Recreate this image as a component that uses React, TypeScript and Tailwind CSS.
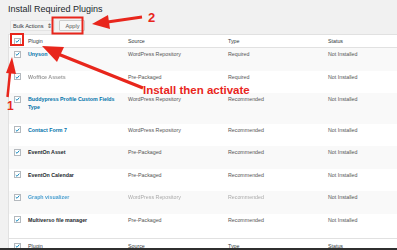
import React from "react";

type Row = {
  name: React.ReactNode;
  kind: "link" | "bold" | "blurgray" | "blurlink";
  source: string;
  type: string;
  blurMeta?: boolean;
};

const rows: Row[] = [
  { name: "Unyson", kind: "link", source: "WordPress Repository", type: "Required" },
  { name: "Woffice Assets", kind: "blurgray", source: "Pre-Packaged", type: "Required" },
  {
    name: (
      <>
        Buddypress Profile Custom Fields
        <br />
        Type
      </>
    ),
    kind: "link",
    source: "WordPress Repository",
    type: "Recommended",
  },
  { name: "Contact Form 7", kind: "link", source: "WordPress Repository", type: "Recommended" },
  { name: "EventOn Asset", kind: "bold", source: "Pre-Packaged", type: "Recommended" },
  { name: "EventOn Calendar", kind: "bold", source: "Pre-Packaged", type: "Recommended" },
  { name: "Graph visualizer", kind: "blurlink", source: "WordPress Repository", type: "Recommended", blurMeta: true },
  { name: "Multiverso file manager", kind: "bold", source: "Pre-Packaged", type: "Recommended" },
];

function Check() {
  return (
    <span className="flex h-[7px] w-[7px] items-center justify-center border border-[#b4b9be] bg-white">
      <svg width="6" height="6" viewBox="0 0 10 10">
        <path d="M1.5 5.2 L4 7.6 L8.6 2.2" fill="none" stroke="#1e8cbe" strokeWidth="2" />
      </svg>
    </span>
  );
}

function nameClass(kind: Row["kind"]) {
  switch (kind) {
    case "link":
      return "text-[#0073aa] font-bold";
    case "bold":
      return "text-[#23282d] font-bold";
    case "blurgray":
      return "text-[#9a9a9a] font-bold blur-[0.7px]";
    case "blurlink":
      return "text-[#4a9fd0] font-bold blur-[0.7px]";
  }
}

function HeadRow({ footer }: { footer?: boolean }) {
  return (
    <div
      className={`grid grid-cols-[17px_100px_100px_100px_1fr] items-center text-[#32373c] ${
        footer ? "border-t border-[#e1e1e1] mt-[2px] h-[15px]" : "border-b border-[#e1e1e1] h-[13px]"
      }`}
    >
      <div className="flex justify-center">
        <Check />
      </div>
      <div className="pl-[2px]">Plugin</div>
      <div className="pl-[2px]">Source</div>
      <div className="pl-[2px]">Type</div>
      <div className="pl-[2px]">Status</div>
    </div>
  );
}

export default function App() {
  return (
    <div className="relative h-[250px] w-[397px] overflow-hidden bg-[#f1f1f1] font-['Liberation_Sans',Arial,sans-serif] text-[5.3px] leading-[8px] text-[#555]">
      <div className="pl-[8px]">
        <h1 className="pt-[3px] text-[9px] leading-[12px] font-normal text-[#23282d]">Install Required Plugins</h1>
        <div className="mt-[4px] ml-[2px] flex h-[13px] items-center gap-[4px]">
          <div className="flex h-[11px] items-center gap-[4px] rounded-[1px] border border-[#e4e4e4] bg-[#f4f4f4] px-[2px] text-[#32373c] text-[5.6px]">
            <span>Bulk Actions</span>
            <span className="text-[6px] leading-none">⇕</span>
          </div>
          <div className="flex h-[11px] items-center rounded-[1px] border border-[#ccc] bg-[#f7f7f7] px-[5px] text-[#555] text-[5.6px]">
            Apply
          </div>
        </div>
        <div className="mt-[2px] border-l border-t border-[#e1e1e1] bg-white">
          <HeadRow />
          {rows.map((r, i) => (
            <div
              key={i}
              className={`grid grid-cols-[17px_100px_100px_100px_1fr] items-start pt-[2px] pb-[12.5px] ${
                i % 2 === 0 ? "bg-[#f9f9f9]" : "bg-white"
              }`}
            >
              <div className="flex h-[8px] items-center justify-center">
                <Check />
              </div>
              <div className={`pl-[2px] ${nameClass(r.kind)}`}>{r.name}</div>
              <div className={`pl-[2px] ${r.blurMeta ? "blur-[0.7px] text-[#aaa]" : ""}`}>{r.source}</div>
              <div className={`pl-[2px] ${r.blurMeta ? "blur-[0.7px] text-[#aaa]" : ""}`}>{r.type}</div>
              <div className="pl-[2px]">Not Installed</div>
            </div>
          ))}
          <HeadRow footer />
        </div>
      </div>
      <div className="absolute bottom-0 left-0 h-[2px] w-full bg-[#2f2f2f]" />

      {/* annotations */}
      <svg className="pointer-events-none absolute inset-0" width="397" height="250" viewBox="0 0 397 250">
        <rect x="52.5" y="17.5" width="30" height="16" fill="none" stroke="#e8261c" strokeWidth="2" />
        <rect x="11" y="34" width="12" height="11" fill="none" stroke="#e8261c" strokeWidth="2" />
        <line x1="142" y1="17" x2="104" y2="22.5" stroke="#e8261c" strokeWidth="3" />
        <polygon points="92,24 108,15 110,29" fill="#e8261c" />
        <line x1="143" y1="88" x2="58" y2="54" stroke="#e8261c" strokeWidth="3.5" />
        <polygon points="42,46 64,47 57,62" fill="#e8261c" />
        <line x1="7.5" y1="97" x2="10.5" y2="68" stroke="#e8261c" strokeWidth="2.5" />
        <polygon points="12,57 6,73 16,74" fill="#e8261c" />
      </svg>
      <div className="absolute left-[148px] top-[10px] text-[13px] leading-[15px] font-bold text-[#e8261c]">2</div>
      <div className="absolute left-[143px] top-[85px] text-[11.5px] leading-[11px] font-bold text-[#e8261c]">
        Install then activate
      </div>
      <div className="absolute left-[7px] top-[99px] text-[12px] leading-[14px] font-bold text-[#e8261c]">1</div>
    </div>
  );
}
